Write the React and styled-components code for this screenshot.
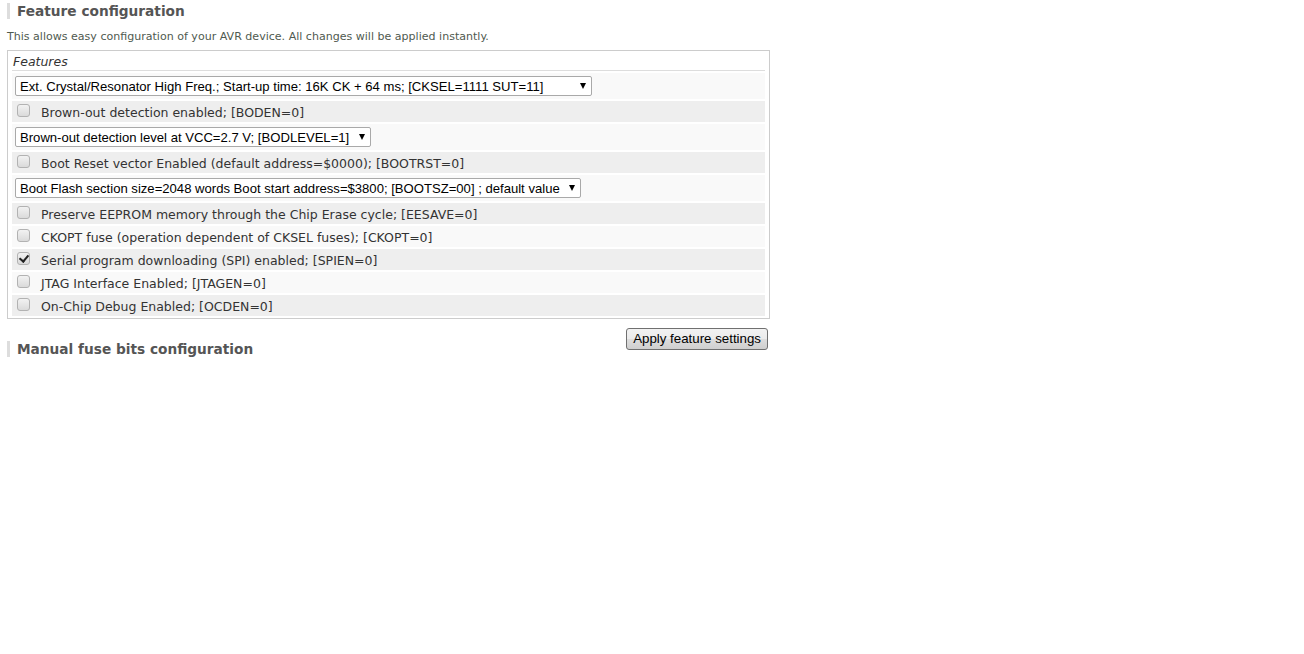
import React from "react";
import styled, { createGlobalStyle } from "styled-components";

const Global = createGlobalStyle`
  html, body { margin: 0; padding: 0; background: #fff; }
  body { font-family: "DejaVu Sans", Verdana, sans-serif; color: #333; }
`;

const Page = styled.div`
  padding: 3px 0 0 7px;
`;

const Heading = styled.h2`
  margin: ${(p) => p.$top || 0}px 0 0 0;
  height: 16px;
  line-height: 16px;
  border-left: 3px solid #dddddd;
  padding-left: 7px;
  font-size: 13.7px;
  font-weight: bold;
  color: #555555;
  white-space: nowrap;
`;

const Description = styled.p`
  margin: 11px 0 0 0;
  font-size: 11.05px;
  line-height: 14px;
  color: #4f5a4f;
`;

const Panel = styled.div`
  box-sizing: border-box;
  width: 763px;
  margin-top: 6px;
  border: 1px solid #cccccc;
  padding: 0 4px 2px 4px;
`;

const PanelHeader = styled.div`
  height: 18px;
  padding: 1px 0 0 1px;
  line-height: 19px;
  border-bottom: 1px solid #dddddd;
  font-size: 12.5px;
  font-style: italic;
  color: #333;
`;

const Rows = styled.div`
  display: flex;
  flex-direction: column;
  gap: 2px;
  margin-top: 2px;
`;

const Row = styled.div`
  display: flex;
  align-items: center;
  height: ${(p) => (p.$kind === "select" ? 26 : 21)}px;
  padding-left: ${(p) => (p.$kind === "select" ? 3 : 5)}px;
  background: ${(p) => (p.$shade ? "#eeeeee" : "#f9f9f9")};
`;

const SelectWrap = styled.div`
  position: relative;
  display: inline-flex;
`;

const Select = styled.select`
  appearance: none;
  -webkit-appearance: none;
  box-sizing: border-box;
  width: ${(p) => p.$width}px;
  height: 20px;
  margin: 0;
  padding: 0 18px 0 4px;
  border: 1px solid #a9a9a9;
  border-radius: 2px;
  background: #ffffff;
  font-family: "Liberation Sans", Arial, sans-serif;
  font-size: 13.1px;
  color: #000;
  outline: none;
`;

const Arrow = styled.span`
  position: absolute;
  right: 6px;
  top: 7px;
  width: 0;
  height: 0;
  border-left: 3.5px solid transparent;
  border-right: 3.5px solid transparent;
  border-top: 6px solid #000;
  pointer-events: none;
`;

const Check = styled.input`
  appearance: none;
  -webkit-appearance: none;
  position: relative;
  box-sizing: border-box;
  width: 13px;
  height: 13px;
  margin: 0 11px 0 0;
  border: 1px solid #b2b2b2;
  border-radius: 3px;
  background: linear-gradient(#f2f2f2, #dadada);
  flex: none;
  transform: translateY(-1px);

  &:checked::after {
    content: "";
    position: absolute;
    left: 3px;
    top: 0px;
    width: 4px;
    height: 7px;
    border-right: 2px solid #222;
    border-bottom: 2px solid #222;
    transform: rotate(40deg);
  }
`;

const Label = styled.span`
  margin-top: 2px;
  font-size: 12.5px;
  color: #333333;
  white-space: nowrap;
`;

const Actions = styled.div`
  box-sizing: border-box;
  width: 763px;
  margin-top: 9px;
  display: flex;
  justify-content: space-between;
  align-items: flex-start;
`;

const Button = styled.button`
  height: 22px;
  margin: 0 2px 0 0;
  padding: 0 6px;
  border: 1px solid #707070;
  border-radius: 3px;
  background: linear-gradient(#f2f2f2 0%, #ebebeb 50%, #dddddd 51%, #cfcfcf 100%);
  font-family: "Liberation Sans", Arial, sans-serif;
  font-size: 13.3px;
  line-height: 18px;
  color: #000;
`;

const features = [
  { kind: "select", width: 577, text: "Ext. Crystal/Resonator High Freq.; Start-up time: 16K CK + 64 ms; [CKSEL=1111 SUT=11]" },
  { kind: "check", text: "Brown-out detection enabled; [BODEN=0]" },
  { kind: "select", width: 356, text: "Brown-out detection level at VCC=2.7 V; [BODLEVEL=1]" },
  { kind: "check", text: "Boot Reset vector Enabled (default address=$0000); [BOOTRST=0]" },
  { kind: "select", width: 566, text: "Boot Flash section size=2048 words Boot start address=$3800; [BOOTSZ=00] ; default value" },
  { kind: "check", text: "Preserve EEPROM memory through the Chip Erase cycle; [EESAVE=0]" },
  { kind: "check", text: "CKOPT fuse (operation dependent of CKSEL fuses); [CKOPT=0]" },
  { kind: "check", checked: true, text: "Serial program downloading (SPI) enabled; [SPIEN=0]" },
  { kind: "check", text: "JTAG Interface Enabled; [JTAGEN=0]" },
  { kind: "check", text: "On-Chip Debug Enabled; [OCDEN=0]" },
];

export default function App() {
  return (
    <>
      <Global />
      <Page>
        <Heading>Feature configuration</Heading>
        <Description>
          This allows easy configuration of your AVR device. All changes will be applied instantly.
        </Description>
        <Panel>
          <PanelHeader>Features</PanelHeader>
          <Rows>
            {features.map((f, i) => (
              <Row key={i} $kind={f.kind} $shade={i % 2 === 1}>
                {f.kind === "select" ? (
                  <SelectWrap>
                    <Select $width={f.width} defaultValue="a">
                      <option value="a">{f.text}</option>
                    </Select>
                    <Arrow />
                  </SelectWrap>
                ) : (
                  <>
                    <Check type="checkbox" defaultChecked={!!f.checked} />
                    <Label>{f.text}</Label>
                  </>
                )}
              </Row>
            ))}
          </Rows>
        </Panel>
        <Actions>
          <Heading $top={13}>Manual fuse bits configuration</Heading>
          <Button type="button">Apply feature settings</Button>
        </Actions>
      </Page>
    </>
  );
}
